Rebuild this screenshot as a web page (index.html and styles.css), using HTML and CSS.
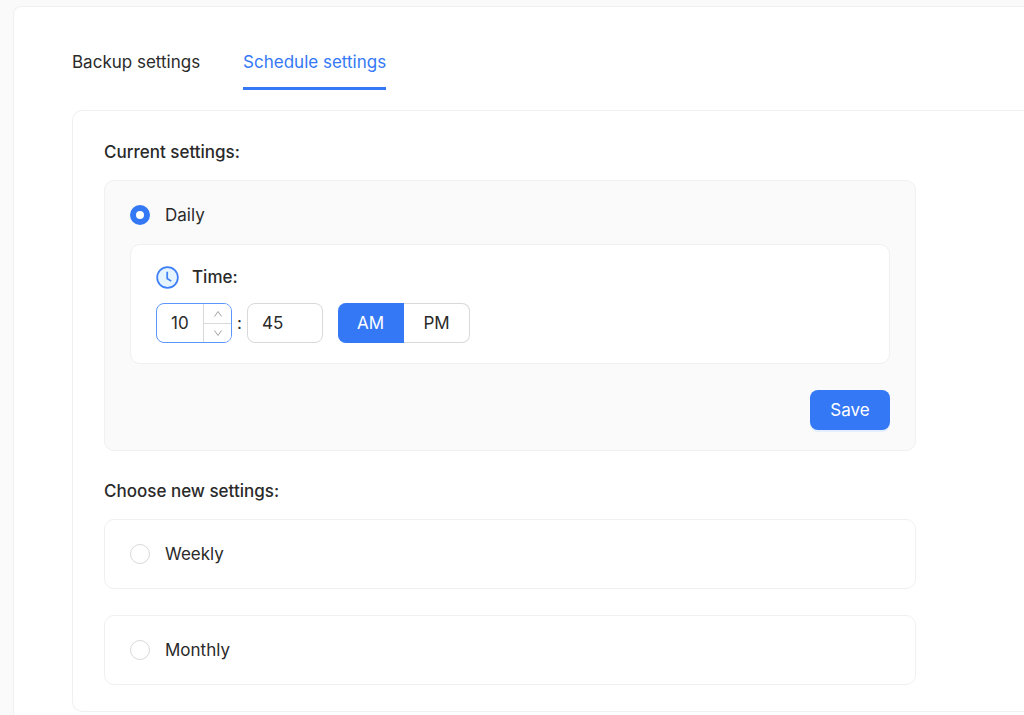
FILE: index.html
```html
<!DOCTYPE html>
<html lang="en">
<head>
<meta charset="utf-8">
<meta name="viewport" content="width=device-width, initial-scale=1">
<title>Schedule settings</title>
<link rel="stylesheet" href="styles.css">
</head>
<body>
<main class="page">
  <nav class="tabs">
    <a class="tab" href="#backup">Backup settings</a>
    <a class="tab tab-active" href="#schedule" aria-current="page">Schedule settings</a>
  </nav>
  <form class="panel">
    <h2 class="heading">Current settings:</h2>
    <section class="card card-current">
      <label class="option"><input class="radio" type="radio" name="period" checked>Daily</label>
      <div class="time-box">
        <div class="time-title">
          <svg class="clock" viewBox="0 0 24 24" aria-hidden="true">
            <circle cx="12" cy="12" r="10.8" fill="#e6f4ff" stroke="#3f80f7" stroke-width="1.8"/>
            <path d="M11.7 6v7l4.2 2.8" fill="none" stroke="#3f80f7" stroke-width="1.8"/>
          </svg>
          <span>Time:</span>
        </div>
        <div class="time-row">
          <div class="number number-focus">
            <input class="number-input" type="text" inputmode="numeric" value="10" aria-label="Hour">
            <div class="steps">
              <button class="step" type="button" aria-label="Increase hour"><svg class="arrow" viewBox="0 0 10 8"><path d="M1.5 6.5 5 1.5l3.5 5"/></svg></button>
              <button class="step" type="button" aria-label="Decrease hour"><svg class="arrow" viewBox="0 0 10 8"><path d="M1.5 1.5 5 6.5l3.5-5"/></svg></button>
            </div>
          </div>
          <span class="colon">:</span>
          <div class="number">
            <input class="number-input" type="text" inputmode="numeric" value="45" aria-label="Minute">
          </div>
          <div class="segments">
            <button class="segment segment-on" type="button" aria-pressed="true">AM</button>
            <button class="segment" type="button" aria-pressed="false">PM</button>
          </div>
        </div>
      </div>
      <button class="save" type="submit">Save</button>
    </section>
    <h2 class="heading heading-next">Choose new settings:</h2>
    <div class="choices">
      <section class="card"><label class="option"><input class="radio" type="radio" name="period">Weekly</label></section>
      <section class="card"><label class="option"><input class="radio" type="radio" name="period">Monthly</label></section>
    </div>
  </form>
</main>
</body>
</html>
```

FILE: styles.css
```css
* {
  box-sizing: border-box;
}

body {
  margin: 0;
  background: #fafafa;
  color: #2a2a2a;
  font-family: Inter, "Liberation Sans", sans-serif;
  font-size: 17px;
  line-height: 28px;
}

button,
input {
  margin: 0;
  padding: 0;
  border: 0;
  color: inherit;
  font: inherit;
}

button {
  cursor: pointer;
}

.page {
  min-height: calc(100vh - 6px);
  margin: 6px 0 0 13px;
  padding: 41px 0 3px 58px;
  border: 1px solid #f0f0f0;
  border-width: 1px 0 0 1px;
  border-radius: 8px 0 0 0;
  background: #fff;
}

.tabs {
  display: flex;
  gap: 43px;
  margin-bottom: 20px;
}

.tab {
  padding-bottom: 11px;
  border-bottom: 3px solid transparent;
  color: inherit;
  text-decoration: none;
}

.tab-active {
  border-color: #3478f6;
  color: #3478f6;
}

.panel {
  padding: 26px 31px;
  border: 1px solid #f0f0f0;
  border-right: 0;
  border-radius: 10px 0 0 10px;
}

.heading {
  margin: 0 0 13px;
  font-size: 17px;
  font-weight: 500;
  line-height: 30px;
}

.heading-next {
  margin-top: 25px;
}

.card {
  max-width: 812px;
  padding: 20px 25px;
  border: 1px solid #f0f0f0;
  border-radius: 10px;
}

.card-current {
  display: flex;
  flex-direction: column;
  background: #fafafa;
}

.choices {
  display: grid;
  gap: 26px;
}

.option {
  display: flex;
  align-items: center;
  gap: 15px;
}

.radio {
  appearance: none;
  width: 20px;
  height: 20px;
  border: 1px solid #d9d9d9;
  border-radius: 50%;
  background: #fff;
}

.radio:checked {
  border: 6px solid #3478f6;
}

.time-box {
  margin: 15px 0 26px;
  padding: 18px 25px 20px;
  border: 1px solid #f0f0f0;
  border-radius: 10px;
  background: #fff;
}

.time-title {
  display: flex;
  align-items: center;
  gap: 13px;
  margin-bottom: 12px;
  font-weight: 500;
}

.clock {
  width: 23px;
  height: 23px;
}

.time-row {
  display: flex;
  align-items: center;
}

.number {
  display: flex;
  width: 76px;
  height: 40px;
  overflow: hidden;
  border: 1px solid #d9d9d9;
  border-radius: 8px;
}

.number-focus {
  border-color: #5b97fb;
}

.number-input {
  flex: 1;
  min-width: 0;
  padding-left: 14px;
  background: none;
  outline: none;
}

.steps {
  display: grid;
  grid-template-rows: 1fr 1fr;
  width: 28px;
  border-left: 1px solid #d9d9d9;
}

.step {
  display: grid;
  place-items: center;
  background: #fff;
}

.step + .step {
  border-top: 1px solid #d9d9d9;
}

.arrow {
  width: 10px;
  height: 8px;
  fill: none;
  stroke: #a0a0a0;
}

.colon {
  width: 15px;
  text-align: center;
}

.segments {
  display: flex;
  margin-left: 15px;
}

.segment {
  width: 66px;
  height: 40px;
  border: 1px solid #d9d9d9;
  border-left: 0;
  border-radius: 0 8px 8px 0;
  background: #fff;
}

.segment-on {
  border-color: #3478f6;
  border-radius: 8px 0 0 8px;
  background: #3478f6;
  color: #fff;
}

.save {
  align-self: flex-end;
  width: 80px;
  height: 40px;
  border-radius: 8px;
  background: #3478f6;
  box-shadow: 0 2px 1px #e3eefe;
  color: #fff;
}
```
